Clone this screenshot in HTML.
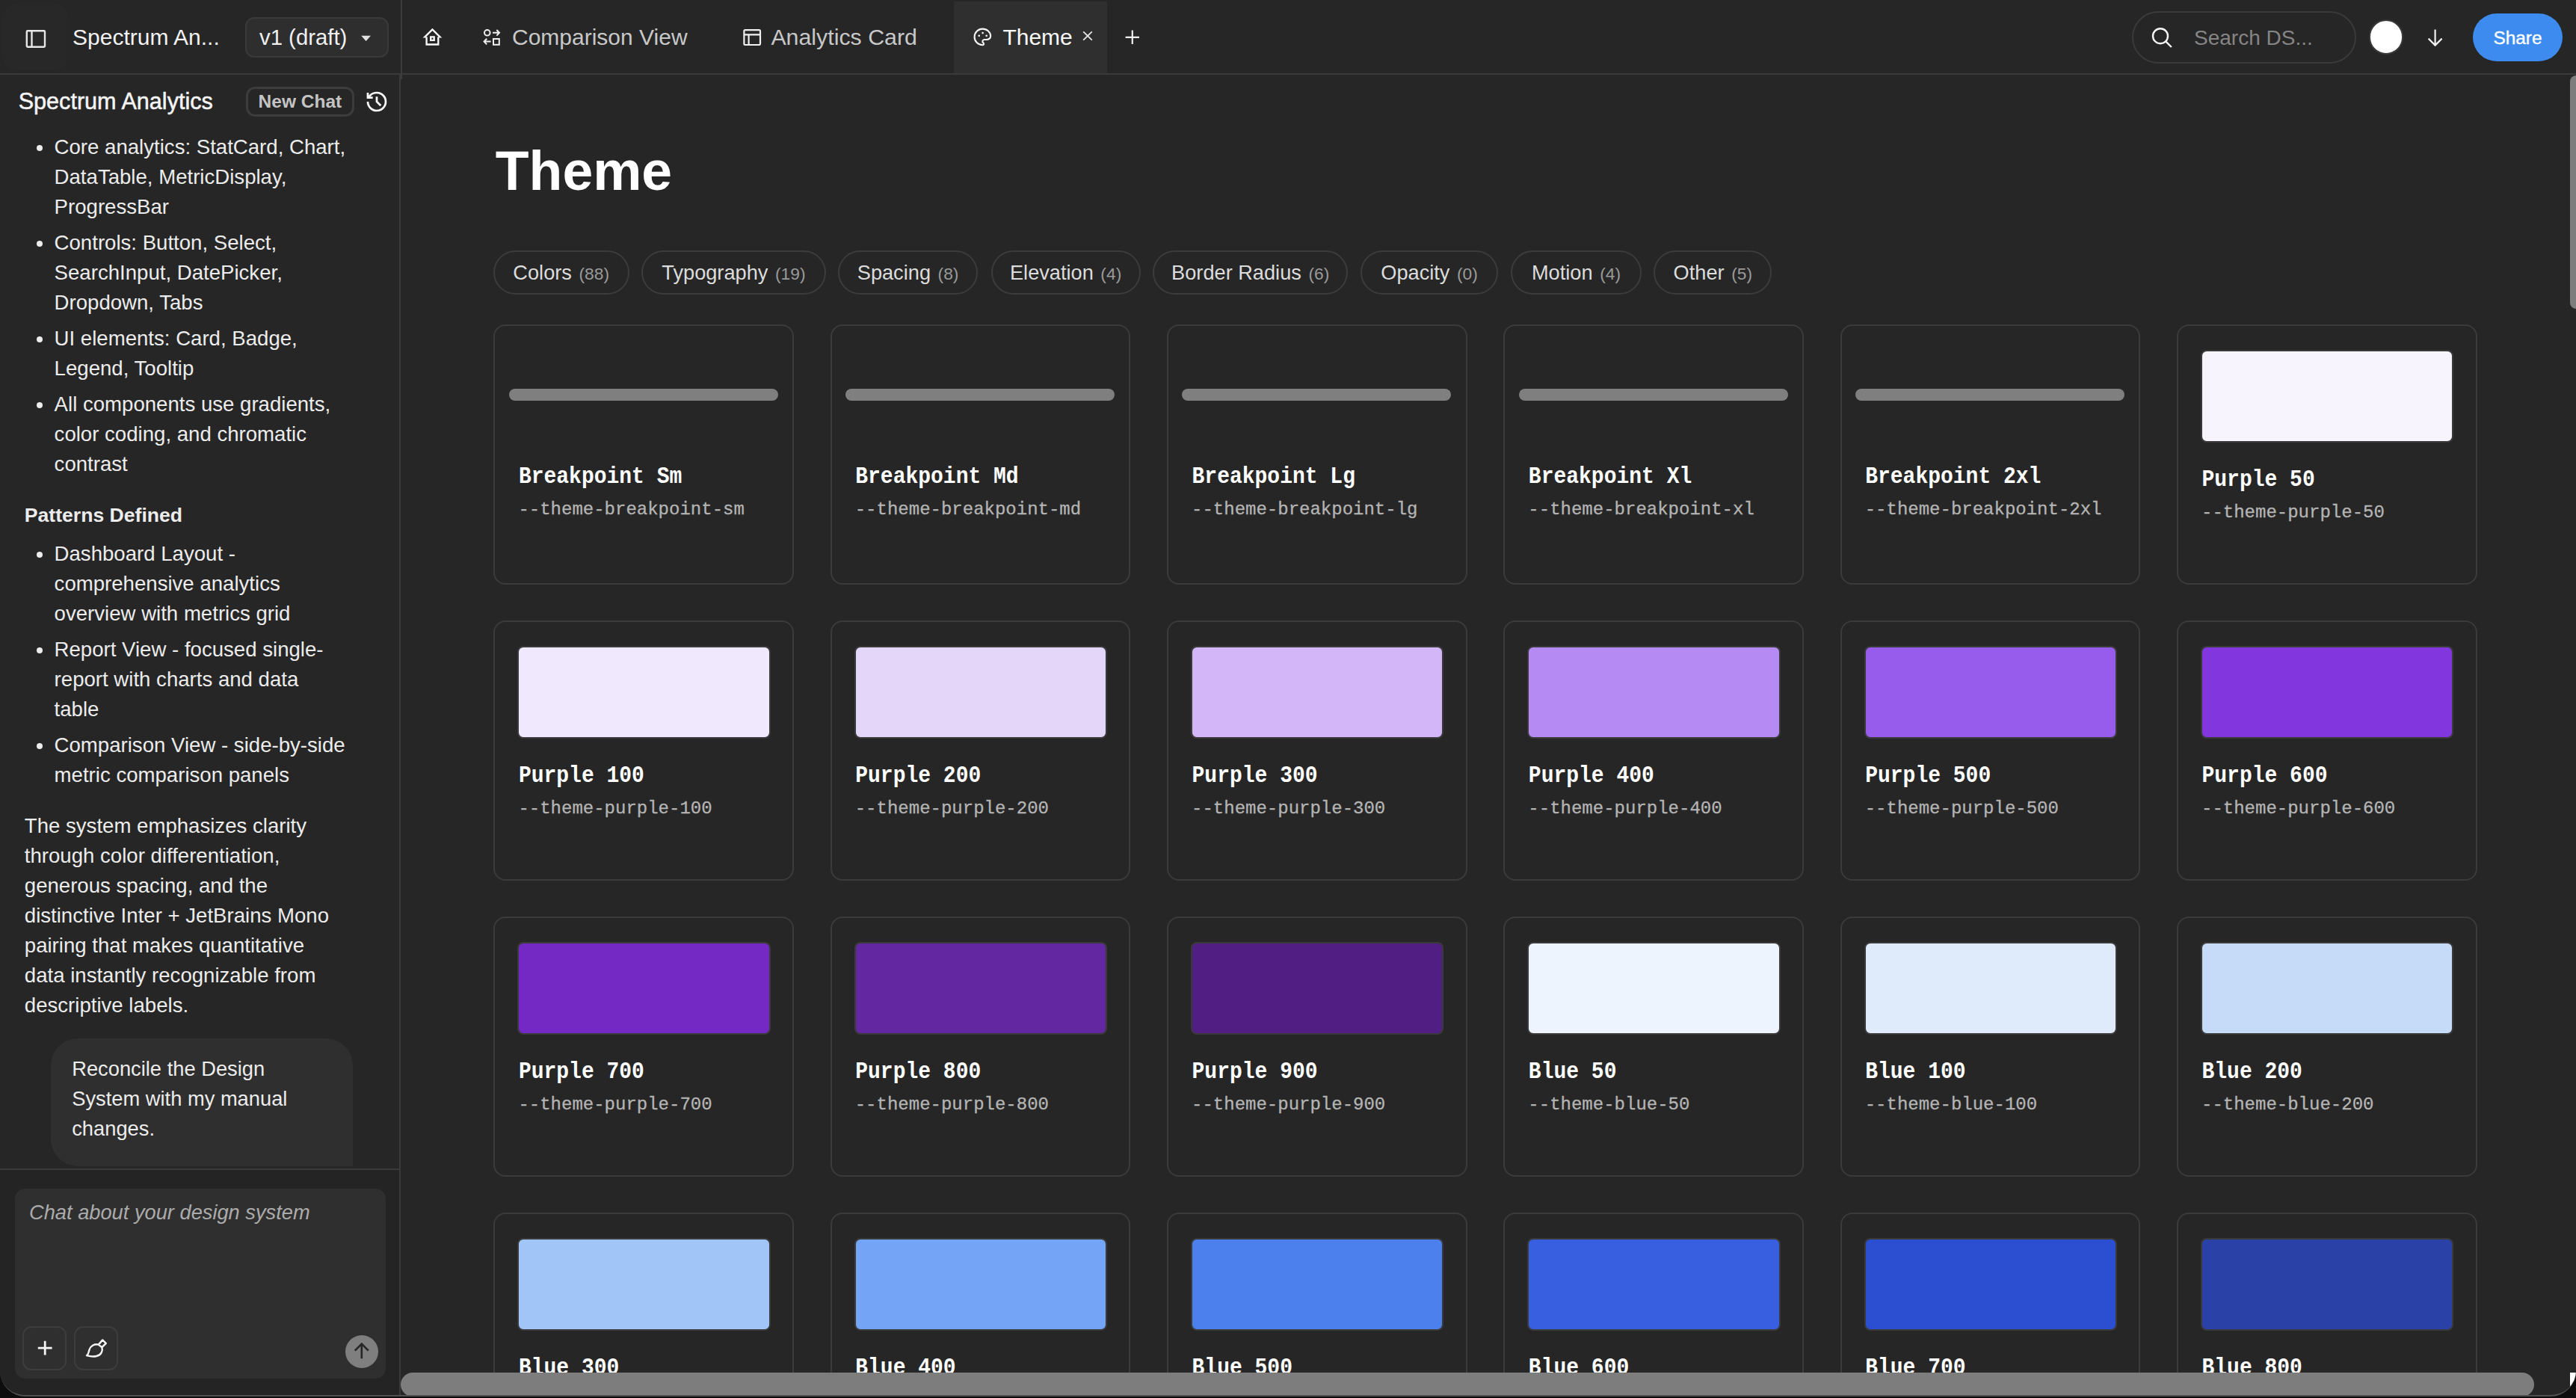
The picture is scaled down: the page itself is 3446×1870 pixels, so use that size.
<!DOCTYPE html>
<html><head><meta charset="utf-8">
<style>
html{zoom:2}
*{box-sizing:border-box;margin:0;padding:0}
html,body{width:1723px;height:935px;overflow:hidden;background:#0d0d0d}
body{font-family:"Liberation Sans",sans-serif;color:#ececec;position:relative}
.abs{position:absolute}
.win{position:absolute;left:0;top:0;width:1723px;height:934px;background:#262626;border-bottom-left-radius:17px;border-bottom-right-radius:17px;overflow:hidden;border-bottom:1px solid #505050}
.top{position:absolute;left:0;top:0;width:1723px;height:50px;border-bottom:1px solid #3a3a3a;background:#262626}
.nw{white-space:nowrap}
svg{position:absolute;overflow:visible}
.side{position:absolute;left:0;top:50px;width:268px;height:884px;border-right:1px solid #3a3a3a}
.main{position:absolute;left:268px;top:50px;width:1455px;height:884px;overflow:hidden}
.chip{position:absolute;top:117.5px;height:29.25px;border:1px solid #3c3c3c;border-radius:15px;font-size:13.6px;color:#dcdcdc;line-height:27.7px;white-space:nowrap}
.chip i{font-style:normal;color:#9a9a9a;font-size:11.4px;margin-left:1px}
.card{position:absolute;width:200.75px;height:173.75px;border:1px solid #3b3b3b;border-radius:8px}
.sw{position:absolute;left:15px;top:16px;width:169.1px;height:61.9px;border-radius:4px;border:1px solid #3a3a3a}
.bar{position:absolute;left:9.2px;top:41.9px;width:180px;height:8px;border-radius:4px;background:#7f7f7f}
.ct{position:absolute;left:15.75px;transform:scaleY(1.1);transform-origin:0 11.73px;font-family:"Liberation Mono",monospace;font-weight:bold;font-size:14px;color:#fff;white-space:nowrap;line-height:16px}
.cs{position:absolute;left:15.5px;font-family:"Liberation Mono",monospace;font-size:12px;color:#b4b4b4;white-space:nowrap;line-height:14px;-webkit-text-stroke:0.15px #b4b4b4}
.chat{position:absolute;font-size:13.8px;line-height:20px;color:#ececec;white-space:nowrap}
.li{position:absolute;left:36.3px;font-size:13.8px;line-height:20px;color:#ececec;white-space:nowrap}
.dot{position:absolute;left:24.45px;width:4.2px;height:4.2px;border-radius:50%;background:#ececec}
</style></head>
<body>
<div class="win">
  <div class="top">
    <div class="abs" style="left:1.5px;top:2.5px;width:44.5px;height:44.5px;border-radius:10px;background:#282828"></div>
    <svg style="left:0;top:0" width="50" height="50" viewBox="0 0 50 50"><rect x="17.9" y="20.6" width="12.1" height="10.8" rx="0.6" fill="none" stroke="#e6e6e6" stroke-width="1.2"/><line x1="21.25" y1="20.6" x2="21.25" y2="31.4" stroke="#e6e6e6" stroke-width="1.2"/></svg>
    <div class="abs nw" style="left:48.5px;top:14.9px;font-size:15px;line-height:20px;color:#f2f2f2">Spectrum An...</div>
    <div class="abs" style="left:164px;top:11.5px;width:96px;height:27px;border:1px solid #3a3a3a;border-radius:6px;background:#2e2e2e"></div>
    <div class="abs nw" style="left:173.5px;top:15.1px;font-size:14.67px;line-height:20px;color:#f0f0f0">v1 (draft)</div>
    <svg style="left:0;top:0" width="1" height="1"><path d="M241.6 23.9 L248 23.9 L244.8 27.5 Z" fill="#e0e0e0"/></svg>
    <div class="abs" style="left:268px;top:0;width:1px;height:49px;background:#3c3c3c"></div>
    <!-- home -->
    <svg style="left:282.26px;top:17.84px" width="13.44" height="13.44" viewBox="0 0 24 24" fill="none" stroke="#f8f8f8" stroke-width="2.1" stroke-linecap="butt" stroke-linejoin="miter"><path d="M5 12l-2 0l9 -9l9 9l-2 0"/><path d="M5 12v9h14v-9"/><path d="M10 12h4v4h-4z"/></svg>
    <!-- comparison -->
    <svg style="left:0;top:0" width="1" height="1"><circle cx="325.9" cy="21.9" r="1.9" fill="none" stroke="#f0f0f0" stroke-width="1"/><path d="M329.5 21.9 H334 M332.2 20 L334 21.9 L332.2 23.8 M328.3 27.8 H323.8 M325.6 25.9 L323.8 27.8 L325.6 29.7" fill="none" stroke="#f0f0f0" stroke-width="1"/><rect x="330" y="26" width="3.9" height="3.9" fill="none" stroke="#f0f0f0" stroke-width="1"/></svg>
    <div class="abs nw" style="left:342.5px;top:15.2px;font-size:15px;line-height:20px;color:#c8c8c8">Comparison View</div>
    <!-- analytics card icon -->
    <svg style="left:0;top:0" width="1" height="1"><rect x="497.7" y="20.1" width="10.8" height="9.9" rx="0.7" fill="none" stroke="#f0f0f0" stroke-width="1.1"/><path d="M497.7 23.2 H508.5 M500.8 23.2 V30" fill="none" stroke="#f0f0f0" stroke-width="1.1"/></svg>
    <div class="abs nw" style="left:515.7px;top:15.1px;font-size:15.17px;line-height:20px;color:#c8c8c8">Analytics Card</div>
    <!-- active tab -->
    <div class="abs" style="left:638px;top:1px;width:102.5px;height:48px;background:#2f2f2f"></div>
    <svg style="left:649.8px;top:17.7px" width="14.4" height="14.4" viewBox="0 0 24 24" fill="none" stroke="#f5f5f5" stroke-width="1.75" stroke-linecap="round" stroke-linejoin="round"><path d="M12 21a9 9 0 0 1 0 -18c4.97 0 9 3.582 9 8c0 1.06 -.474 2.078 -1.318 2.828c-.844 .75 -1.989 1.172 -3.182 1.172h-2.5a2 2 0 0 0 -1 3.75a1.3 1.3 0 0 1 -1 2.25"/><circle cx="8.1" cy="10.7" r="1.1" fill="#f5f5f5" stroke="none"/><circle cx="12.2" cy="7.6" r="1.1" fill="#f5f5f5" stroke="none"/><circle cx="16.4" cy="10.7" r="1.1" fill="#f5f5f5" stroke="none"/></svg>
    <div class="abs nw" style="left:670.7px;top:15.2px;font-size:15px;line-height:20px;color:#fafafa">Theme</div>
    <svg style="left:0;top:0" width="1" height="1"><path d="M724.6 21.2 L730.4 26.8 M730.4 21.2 L724.6 26.8" stroke="#e8e8e8" stroke-width="0.9"/></svg>
    <svg style="left:0;top:0" width="1" height="1"><path d="M757.4 20.3 V29.5 M752.8 24.9 H762" stroke="#f0f0f0" stroke-width="1.1"/></svg>
    <!-- search -->
    <div class="abs" style="left:1426px;top:7.5px;width:150px;height:35px;border:1px solid #3a3a3a;border-radius:18px"></div>
    <svg style="left:0;top:0" width="1" height="1"><circle cx="1445" cy="24.1" r="5" fill="none" stroke="#f5f5f5" stroke-width="1.2"/><path d="M1448.6 27.7 L1452.4 31.5" stroke="#f5f5f5" stroke-width="1.2"/></svg>
    <div class="abs nw" style="left:1467.5px;top:15.6px;font-size:14px;line-height:20px;color:#858585">Search DS...</div>
    <div class="abs" style="left:1584.3px;top:13px;width:23.4px;height:23.4px;border-radius:50%;background:#fff;border:1px solid #3a3a3a"></div>
    <svg style="left:0;top:0" width="1" height="1"><path d="M1628.8 19.8 V30.2 M1624.3 25.8 L1628.8 30.3 L1633.3 25.8" fill="none" stroke="#f0f0f0" stroke-width="1.1"/></svg>
    <div class="abs nw" style="left:1654px;top:8.9px;width:60px;height:32px;border-radius:16px;background:#3d8bee;color:#fff;font-size:12.2px;line-height:32.6px;text-align:center;-webkit-text-stroke:0.2px #fff">Share</div>
  </div>

  <div class="abs" style="left:268px;top:50px;width:1px;height:3px;background:#3c3c3c;z-index:2"></div>
  <div class="side" id="side">

<div class="abs nw" style="left:12.35px;top:7.7px;font-size:15.3px;line-height:20px;color:#f4f4f4;-webkit-text-stroke:0.25px #f4f4f4">Spectrum Analytics</div>
<div class="abs" style="left:164.5px;top:7.9px;width:72.4px;height:20.05px;border:1.75px solid #3c3c3c;border-radius:6px;color:#c4c4c4;font-weight:bold;font-size:12.25px;line-height:17.4px;text-align:center;white-space:nowrap">New Chat</div>
<svg style="left:244px;top:9.85px" width="16" height="16" viewBox="0 0 24 24" fill="none" stroke="#f8f8f8" stroke-width="2.05" stroke-linecap="butt" stroke-linejoin="miter"><path d="M3 12a9 9 0 1 0 9-9 9.75 9.75 0 0 0-6.74 2.74L3 8"/><path d="M3 3v5h5"/><path d="M12 7v5l4 4"/></svg>
<div class="abs" style="left:0;top:0;width:267px;height:730.5px;overflow:hidden">
<div class="dot" style="top:46.85px"></div>
<div class="chat" style="left:36.3px;top:38.67px">Core analytics: StatCard, Chart,</div>
<div class="chat" style="left:36.3px;top:58.67px">DataTable, MetricDisplay,</div>
<div class="chat" style="left:36.3px;top:78.67px">ProgressBar</div>
<div class="dot" style="top:110.85px"></div>
<div class="chat" style="left:36.3px;top:102.67px">Controls: Button, Select,</div>
<div class="chat" style="left:36.3px;top:122.67px">SearchInput, DatePicker,</div>
<div class="chat" style="left:36.3px;top:142.67px">Dropdown, Tabs</div>
<div class="dot" style="top:174.85px"></div>
<div class="chat" style="left:36.3px;top:166.67px">UI elements: Card, Badge,</div>
<div class="chat" style="left:36.3px;top:186.67px">Legend, Tooltip</div>
<div class="dot" style="top:218.85px"></div>
<div class="chat" style="left:36.3px;top:210.67px">All components use gradients,</div>
<div class="chat" style="left:36.3px;top:230.67px">color coding, and chromatic</div>
<div class="chat" style="left:36.3px;top:250.67px">contrast</div>
<div class="dot" style="top:318.75px"></div>
<div class="chat" style="left:36.3px;top:310.57px">Dashboard Layout -</div>
<div class="chat" style="left:36.3px;top:330.57px">comprehensive analytics</div>
<div class="chat" style="left:36.3px;top:350.57px">overview with metrics grid</div>
<div class="dot" style="top:382.75px"></div>
<div class="chat" style="left:36.3px;top:374.57px">Report View - focused single-</div>
<div class="chat" style="left:36.3px;top:394.57px">report with charts and data</div>
<div class="chat" style="left:36.3px;top:414.57px">table</div>
<div class="dot" style="top:446.75px"></div>
<div class="chat" style="left:36.3px;top:438.57px">Comparison View - side-by-side</div>
<div class="chat" style="left:36.3px;top:458.57px">metric comparison panels</div>
<div class="chat" style="left:16.4px;top:284.62px;font-weight:bold;font-size:13.3px">Patterns Defined</div>
<div class="chat" style="left:16.4px;top:492.57px">The system emphasizes clarity</div>
<div class="chat" style="left:16.4px;top:512.57px">through color differentiation,</div>
<div class="chat" style="left:16.4px;top:532.57px">generous spacing, and the</div>
<div class="chat" style="left:16.4px;top:552.57px">distinctive Inter + JetBrains Mono</div>
<div class="chat" style="left:16.4px;top:572.57px">pairing that makes quantitative</div>
<div class="chat" style="left:16.4px;top:592.57px">data instantly recognizable from</div>
<div class="chat" style="left:16.4px;top:612.57px">descriptive labels.</div>
<div class="abs" style="left:33.9px;top:644.3px;width:202px;height:85.9px;background:#2f2f2f;border-radius:18px 18px 0 18px"></div>
<div class="chat" style="left:48.1px;top:654.82px;font-size:13.65px">Reconcile the Design</div>
<div class="chat" style="left:48.1px;top:674.82px;font-size:13.65px">System with my manual</div>
<div class="chat" style="left:48.1px;top:694.82px;font-size:13.65px">changes.</div>
</div>
<div class="abs" style="left:0;top:731.65px;width:267px;height:1px;background:#3a3a3a"></div>
<div class="abs" style="left:0;top:732.65px;width:267px;height:152px;background:#242424"></div>
<div class="abs" style="left:10px;top:745px;width:247.85px;height:126.85px;background:#2f2f2f;border-radius:7px"></div>
<div class="abs nw" style="left:19.5px;top:750.78px;font-size:13.63px;line-height:20px;font-style:italic;color:#ababab">Chat about your design system</div>
<div class="abs" style="left:15.1px;top:837.2px;width:29.5px;height:29.5px;border:1px solid #3d3d3d;border-radius:6px"></div>
<svg style="left:0;top:0" width="1" height="1"><path d="M30.1 846.9 V856.3 M25.4 851.6 H34.8" stroke="#f5f5f5" stroke-width="1.4"/></svg>
<div class="abs" style="left:49.3px;top:837.2px;width:29.6px;height:29.5px;border:1px solid #3d3d3d;border-radius:6px"></div>
<svg style="left:0;top:0" width="1" height="1"><path d="M68.6 846.2 L70.9 848.4 L68.2 851.1 C68.9 853.4 67.7 856.3 64.5 857 C62.3 857.5 60.2 857.2 58 856.6 C59.4 855.6 59.2 854.2 59.8 852.6 C60.6 850.2 63.3 848.6 65.9 849.3 Z M65.9 849.3 L68.2 851.1" fill="none" stroke="#f5f5f5" stroke-width="1.2" stroke-linejoin="round"/></svg>
<div class="abs" style="left:230.9px;top:843.1px;width:22px;height:22px;border-radius:50%;background:#7f7f7f"></div>
<svg style="left:0;top:0" width="1" height="1"><path d="M241.9 858.6 V848.9 M237.4 853.3 L241.9 848.8 L246.4 853.3" fill="none" stroke="#262626" stroke-width="1.3"/></svg>

  </div>

  <div class="main" id="main">

<div class="abs nw" style="left:63.4px;top:44.74px;font-size:36.67px;line-height:40px;font-weight:bold;color:#fff">Theme</div>
<div class="chip" style="left:61.90px;width:90.90px;text-align:center">Colors <i>(88)</i></div>
<div class="chip" style="left:161.00px;width:123.40px;text-align:center">Typography <i>(19)</i></div>
<div class="chip" style="left:292.50px;width:93.60px;text-align:center">Spacing <i>(8)</i></div>
<div class="chip" style="left:394.80px;width:100.00px;text-align:center">Elevation <i>(4)</i></div>
<div class="chip" style="left:503.00px;width:130.70px;text-align:center">Border Radius <i>(6)</i></div>
<div class="chip" style="left:642.00px;width:92.10px;text-align:center">Opacity <i>(0)</i></div>
<div class="chip" style="left:742.60px;width:87.30px;text-align:center">Motion <i>(4)</i></div>
<div class="chip" style="left:838.10px;width:79.10px;text-align:center">Other <i>(5)</i></div>
<div class="card" style="left:62.20px;top:167.00px"><div class="bar"></div><div class="ct" style="top:93.37px">Breakpoint Sm</div><div class="cs" style="top:116.20px">--theme-breakpoint-sm</div></div>
<div class="card" style="left:287.36px;top:167.00px"><div class="bar"></div><div class="ct" style="top:93.37px">Breakpoint Md</div><div class="cs" style="top:116.20px">--theme-breakpoint-md</div></div>
<div class="card" style="left:512.52px;top:167.00px"><div class="bar"></div><div class="ct" style="top:93.37px">Breakpoint Lg</div><div class="cs" style="top:116.20px">--theme-breakpoint-lg</div></div>
<div class="card" style="left:737.68px;top:167.00px"><div class="bar"></div><div class="ct" style="top:93.37px">Breakpoint Xl</div><div class="cs" style="top:116.20px">--theme-breakpoint-xl</div></div>
<div class="card" style="left:962.84px;top:167.00px"><div class="bar"></div><div class="ct" style="top:93.37px">Breakpoint 2xl</div><div class="cs" style="top:116.20px">--theme-breakpoint-2xl</div></div>
<div class="card" style="left:1188.00px;top:167.00px"><div class="sw" style="background:#f7f4fe"></div><div class="ct" style="top:95.47px">Purple 50</div><div class="cs" style="top:118.00px">--theme-purple-50</div></div>
<div class="card" style="left:62.20px;top:365.00px"><div class="sw" style="background:#f0e8fc"></div><div class="ct" style="top:95.47px">Purple 100</div><div class="cs" style="top:118.00px">--theme-purple-100</div></div>
<div class="card" style="left:287.36px;top:365.00px"><div class="sw" style="background:#e4d6f9"></div><div class="ct" style="top:95.47px">Purple 200</div><div class="cs" style="top:118.00px">--theme-purple-200</div></div>
<div class="card" style="left:512.52px;top:365.00px"><div class="sw" style="background:#d2b6f7"></div><div class="ct" style="top:95.47px">Purple 300</div><div class="cs" style="top:118.00px">--theme-purple-300</div></div>
<div class="card" style="left:737.68px;top:365.00px"><div class="sw" style="background:#b58af2"></div><div class="ct" style="top:95.47px">Purple 400</div><div class="cs" style="top:118.00px">--theme-purple-400</div></div>
<div class="card" style="left:962.84px;top:365.00px"><div class="sw" style="background:#975cec"></div><div class="ct" style="top:95.47px">Purple 500</div><div class="cs" style="top:118.00px">--theme-purple-500</div></div>
<div class="card" style="left:1188.00px;top:365.00px"><div class="sw" style="background:#8236de"></div><div class="ct" style="top:95.47px">Purple 600</div><div class="cs" style="top:118.00px">--theme-purple-600</div></div>
<div class="card" style="left:62.20px;top:563.00px"><div class="sw" style="background:#7428c4"></div><div class="ct" style="top:95.47px">Purple 700</div><div class="cs" style="top:118.00px">--theme-purple-700</div></div>
<div class="card" style="left:287.36px;top:563.00px"><div class="sw" style="background:#6327a1"></div><div class="ct" style="top:95.47px">Purple 800</div><div class="cs" style="top:118.00px">--theme-purple-800</div></div>
<div class="card" style="left:512.52px;top:563.00px"><div class="sw" style="background:#511f84"></div><div class="ct" style="top:95.47px">Purple 900</div><div class="cs" style="top:118.00px">--theme-purple-900</div></div>
<div class="card" style="left:737.68px;top:563.00px"><div class="sw" style="background:#eef4fd"></div><div class="ct" style="top:95.47px">Blue 50</div><div class="cs" style="top:118.00px">--theme-blue-50</div></div>
<div class="card" style="left:962.84px;top:563.00px"><div class="sw" style="background:#dfeafb"></div><div class="ct" style="top:95.47px">Blue 100</div><div class="cs" style="top:118.00px">--theme-blue-100</div></div>
<div class="card" style="left:1188.00px;top:563.00px"><div class="sw" style="background:#c6dbf8"></div><div class="ct" style="top:95.47px">Blue 200</div><div class="cs" style="top:118.00px">--theme-blue-200</div></div>
<div class="card" style="left:62.20px;top:761.00px"><div class="sw" style="background:#a2c5f7"></div><div class="ct" style="top:95.47px">Blue 300</div><div class="cs" style="top:118.00px">--theme-blue-300</div></div>
<div class="card" style="left:287.36px;top:761.00px"><div class="sw" style="background:#74a4f5"></div><div class="ct" style="top:95.47px">Blue 400</div><div class="cs" style="top:118.00px">--theme-blue-400</div></div>
<div class="card" style="left:512.52px;top:761.00px"><div class="sw" style="background:#4c80ec"></div><div class="ct" style="top:95.47px">Blue 500</div><div class="cs" style="top:118.00px">--theme-blue-500</div></div>
<div class="card" style="left:737.68px;top:761.00px"><div class="sw" style="background:#375fdf"></div><div class="ct" style="top:95.47px">Blue 600</div><div class="cs" style="top:118.00px">--theme-blue-600</div></div>
<div class="card" style="left:962.84px;top:761.00px"><div class="sw" style="background:#2c4fd1"></div><div class="ct" style="top:95.47px">Blue 700</div><div class="cs" style="top:118.00px">--theme-blue-700</div></div>
<div class="card" style="left:1188.00px;top:761.00px"><div class="sw" style="background:#2a42a8"></div><div class="ct" style="top:95.47px">Blue 800</div><div class="cs" style="top:118.00px">--theme-blue-800</div></div>
<div class="abs" style="left:0;top:868px;width:1427px;height:15.9px;border-radius:8px;background:#7d7d7d"></div>
<div class="abs" style="left:1450.9px;top:867.85px;width:4.1px;height:20px;background:#fff"></div>
<div class="abs" style="left:1451px;top:0.3px;width:8px;height:156.2px;border-radius:4px 0 0 4px;background:#7d7d7d"></div>

  </div>
</div>
</body></html>
